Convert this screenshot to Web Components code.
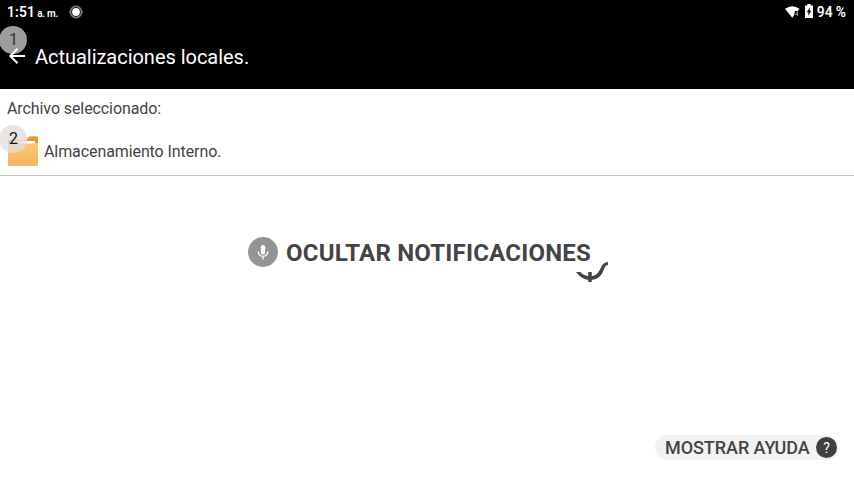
<!DOCTYPE html>
<html lang="es">
<head>
<meta charset="utf-8">
<title>Actualizaciones locales</title>
<style>
html,body{margin:0;width:854px;height:480px;overflow:hidden;background:#fff;font-family:Roboto,sans-serif;color:#444}
</style>
</head>
<body>
<update-screen></update-screen>
<script>
function define(name, html) {
  const template = document.createElement('template');
  template.innerHTML = html;
  customElements.define(name, class extends HTMLElement {
    constructor() {
      super();
      this.attachShadow({ mode: 'open' }).append(template.content.cloneNode(true));
    }
  });
}

define('status-bar', `
<style>
:host{display:flex;align-items:center;height:24px;padding:0 8px 0 7px;box-sizing:border-box;color:#fff;font-weight:600;font-size:13.8px;line-height:24px;white-space:nowrap}
small{font-size:10px;margin-left:2px;letter-spacing:-.3px}
.clock{width:62px;margin-top:2px;letter-spacing:.2px}
.level{margin-top:0;letter-spacing:-.05px}
.space{flex:1}
svg{display:block;flex:none}
.wifi{margin-right:5px;margin-top:-1px}.battery{margin-right:4px;margin-top:-3px}
</style>
<span class="clock">1:51<small>a. m.</small></span>
<svg width="14" height="14" viewBox="0 0 14 14"><circle cx="7" cy="7" r="5.6" fill="none" stroke="#777" stroke-width="1.7"/><path d="M0 7h2M12 7h2" stroke="#999"/><circle cx="7" cy="7" r="3.9" fill="#fff"/></svg>
<span class="space"></span>
<svg class="wifi" width="15" height="12" viewBox="0 0 15 12"><path d="M0 2.8Q7.2-2.3 14.5 2.8L12.8 5H10L8.8 9.8 7.2 11.7Z" fill="#fff"/><path d="M12.5 10V5.5L10.2 8.5H13.5" fill="none" stroke="#888" stroke-width="1"/></svg>
<svg class="battery" width="8" height="14" viewBox="0 0 8 14"><path d="M2.3 0h3.4v1.5H8V14H0V1.5h2.3Z" fill="#fff"/><path d="M4.8 3.5v3.2h1.5L3.4 11.7V8.2H1.8Z" fill="#000"/></svg>
<span class="level">94 %</span>`);

define('step-badge', `
<style>
:host{position:absolute;width:28px;height:28px;border-radius:50%;font-size:16px;line-height:28px;text-align:center}
</style><slot></slot>`);

define('title-bar', `
<style>
:host{display:flex;align-items:center;height:65px;padding:0 7px;box-sizing:border-box;color:#fff;font-size:20px;position:relative}
svg{position:relative;margin:-2px 8px 0 0}
.title{line-height:28px;margin-top:1px;letter-spacing:-.03px}
step-badge{left:-1px;top:2px;background:#9c9c9c;color:#333;text-indent:1px}
</style>
<step-badge>1</step-badge>
<svg width="20" height="20" viewBox="0 0 20 20"><path d="M18 10H3.5M10.5 2.8 3.3 10l7.2 7.2" fill="none" stroke="#fff" stroke-width="2"/></svg>
<span class="title"><slot></slot></span>`);

define('folder-icon', `
<style>:host{display:block;width:30px;height:30px}svg{display:block}</style>
<svg width="30" height="30" viewBox="0 0 30 30"><defs><linearGradient id="g" x2="0" y2="1"><stop stop-color="#ffc87d"/><stop offset="1" stop-color="#f7b45e"/></linearGradient></defs><path d="M0 4h18.5L20.5 1 22 .3H29l1 1V11H0Z" fill="#eb9740"/><path d="M2 5h25v3H2Z" fill="#fff"/><path d="M0 7.5h27.5L30 6.5V29q0 1-1 1H1q-1 0-1-1Z" fill="url(#g)"/></svg>`);

define('file-picker', `
<style>
:host{display:block;height:87px;box-sizing:border-box;border-bottom:1px solid #c6c6c6;padding:10px 8px 0 7px;font-size:16px;line-height:20px;letter-spacing:-.09px;position:relative}
.row{display:flex;align-items:center;margin:17px 0 0 1px;gap:6px;height:30px}
.name{margin-top:2px}
step-badge{left:-1px;top:36px;background:rgba(222,222,222,.75);color:#111;text-indent:1px}
</style>
<div><slot name="label"></slot></div>
<div class="row"><folder-icon></folder-icon><span class="name"><slot></slot></span></div>
<step-badge>2</step-badge>`);

define('hide-notifications', `
<style>
:host{display:flex;align-items:center;width:max-content;height:30px;margin:61px 0 0 248px;gap:8px;font-size:24px;font-weight:700;line-height:30px;letter-spacing:.21px;position:relative}
svg{display:block;flex:none}
.text{margin-top:2px}
.cursor{position:absolute;left:328px;top:25px}
</style>
<svg width="30" height="30" viewBox="0 0 30 30"><circle cx="15" cy="15" r="15" fill="#949494"/><rect x="12.8" y="8" width="4.4" height="9.5" rx="2.2" fill="#fff"/><path d="M10.2 14.5a4.8 4.8 0 0 0 9.6 0M15 19.3V22.5" fill="none" stroke="#fff" stroke-width="1.3"/></svg>
<span class="text"><slot></slot></span>
<svg class="cursor" width="32" height="21" viewBox="0 0 32 21"><path d="M0 10h4.3Q8.5 14.3 14 14.3C20.5 14.3 22.5 10.8 25 5.6Q27 .3 32 .1V3.1Q29.6 3 28 7.2C25.6 13.7 22 18 14 18Q6 18 0 10Z" fill="#444"/><path d="M14 10V20" stroke="#444" stroke-width="3.5"/></svg>`);

define('help-button', `
<style>
:host{display:flex;align-items:center;width:184px;height:25px;box-sizing:border-box;padding:0 2px 0 10px;margin:auto 15px 20px auto;border-radius:13px;background:#f2f2f2;font-size:18px;font-weight:500;line-height:25px;letter-spacing:-.06px;justify-content:space-between;white-space:nowrap}
.q{width:21px;height:21px;border-radius:50%;background:#404040;color:#fff;font-size:14px;font-weight:400;line-height:22px;text-align:center}
</style>
<span><slot></slot></span><span class="q">?</span>`);

define('update-screen', `
<style>
:host{display:flex;flex-direction:column;width:854px;height:480px;background:#fff}
header{background:#000;height:89px}
</style>
<header><status-bar></status-bar><title-bar>Actualizaciones locales.</title-bar></header>
<file-picker><span slot="label">Archivo seleccionado:</span>Almacenamiento Interno.</file-picker>
<hide-notifications>OCULTAR NOTIFICACIONES</hide-notifications>
<help-button>MOSTRAR AYUDA</help-button>`);
</script>
</body>
</html>
